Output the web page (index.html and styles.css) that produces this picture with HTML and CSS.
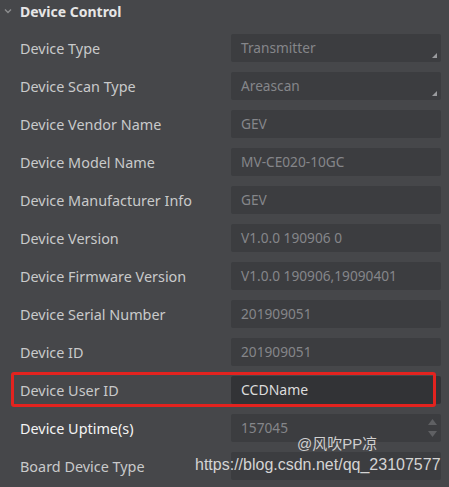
FILE: index.html
```html
<!DOCTYPE html>
<html>
<head>
<meta name="viewport" content="width=device-width, initial-scale=1">
<link rel="stylesheet" href="styles.css">
</head>
<body>

<div class="panel">
    <div class="group-head">
        <svg class="chevron" width="8" height="6" viewBox="0 0 8 6"><path d="M1 1.5 L4 4.5 L7 1.5" fill="none" stroke="#8c8d8f" stroke-width="1.4"/></svg>
        <span>Device Control</span>
    </div>

    <div class="props">
        <div class="row">
            <span class="label">Device Type</span>
            <div class="field select">Transmitter</div>
        </div>
        <div class="row">
            <span class="label">Device Scan Type</span>
            <div class="field select">Areascan</div>
        </div>
        <div class="row">
            <span class="label">Device Vendor Name</span>
            <div class="field">GEV</div>
        </div>
        <div class="row">
            <span class="label">Device Model Name</span>
            <div class="field">MV-CE020-10GC</div>
        </div>
        <div class="row">
            <span class="label">Device Manufacturer Info</span>
            <div class="field">GEV</div>
        </div>
        <div class="row">
            <span class="label">Device Version</span>
            <div class="field">V1.0.0 190906 0</div>
        </div>
        <div class="row">
            <span class="label">Device Firmware Version</span>
            <div class="field">V1.0.0 190906,19090401</div>
        </div>
        <div class="row">
            <span class="label">Device Serial Number</span>
            <div class="field">201909051</div>
        </div>
        <div class="row">
            <span class="label">Device ID</span>
            <div class="field">201909051</div>
        </div>
        <div class="row marked">
            <span class="label">Device User ID</span>
            <div class="field editable">CCDName</div>
        </div>
        <div class="row">
            <span class="label bright">Device Uptime(s)</span>
            <div class="field spin">157045
                <span class="spin-btns">
                    <svg width="9" height="6" viewBox="0 0 9 6"><path d="M0 6 L4.5 0 L9 6 Z" fill="#5f6063"/></svg>
                    <svg width="9" height="6" viewBox="0 0 9 6"><path d="M0 0 L4.5 6 L9 0 Z" fill="#5f6063"/></svg>
                </span>
            </div>
        </div>
        <div class="row">
            <span class="label">Board Device Type</span>
            <div class="field"></div>
        </div>
    </div>

    <div class="watermark">
        <span class="wm-name">@风吹PP凉</span>
        <span class="wm-url">https://blog.csdn.net/qq_23107577</span>
    </div>
</div>

</body>
</html>
```

FILE: styles.css
```css
/* Page base */
body {
  margin: 0;
  background-color: #46474a;
  font-family: "Noto Sans", "Noto Sans CJK SC", sans-serif;
  overflow: hidden;
}

.panel {
  position: relative;
  width: 449px;
  height: 487px;
}

/* Group header with the collapse chevron */
.group-head {
  display: flex;
  align-items: center;
  height: 22px;
  padding-left: 4px;
  color: #e6e6e6;
  font-size: 14px;
  font-weight: bold;
}

.chevron {
  margin-right: 8px;
}

/* Property rows */
.props {
  padding-top: 7px;
}

.row {
  position: relative;
  display: grid;
  grid-template-columns: 211px 210px;
  align-items: center;
  height: 38px;
  padding-left: 20px;
  box-sizing: border-box;
}

.label {
  color: #c9cacb;
  font-size: 14.4px;
}

.label.bright {
  color: #f4f4f4;
}

.field {
  position: relative;
  height: 28px;
  line-height: 27px;
  padding-left: 10px;
  background-color: #3c3d40;
  border-radius: 2px;
  color: #85868a;
  font-size: 13.7px;
  white-space: nowrap;
  overflow: hidden;
}

.field.editable {
  background-color: #323336;
  color: #dcdcdc;
  font-size: 14px;
}

/* Small corner arrow of combo boxes */
.field.select:after {
  content: "";
  position: absolute;
  right: 4px;
  bottom: 4px;
  border-left: 5px solid transparent;
  border-bottom: 5px solid #9a9b9e;
}

.spin-btns {
  position: absolute;
  right: 4px;
  top: 5px;
  display: flex;
  flex-direction: column;
  gap: 6px;
}

.spin-btns svg {
  display: block;
}

/* Red annotation box round the edited row */
.row.marked:after {
  content: "";
  position: absolute;
  left: 11px;
  top: 1px;
  width: 425px;
  height: 35px;
  border: 3px solid #e3231f;
  border-radius: 3px;
  box-sizing: border-box;
}

/* Blog watermark over the bottom rows */
.watermark {
  position: absolute;
  left: 0;
  top: 0;
  width: 449px;
  height: 487px;
  pointer-events: none;
}

.wm-name {
  position: absolute;
  left: 297px;
  top: 432px;
  color: #d0d0d0;
  font-family: "Liberation Sans", "Noto Sans CJK SC", sans-serif;
  font-size: 15px;
}

.wm-url {
  position: absolute;
  left: 195px;
  top: 456px;
  color: #d4d4d4;
  font-family: "Liberation Sans", sans-serif;
  font-size: 16px;
}
```
